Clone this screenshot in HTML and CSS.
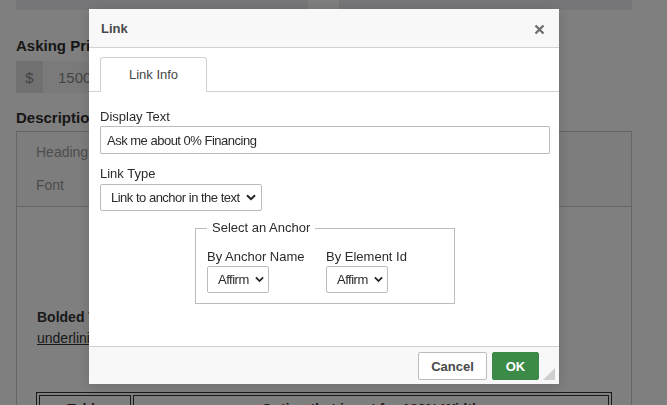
FILE: index.html
```
<!DOCTYPE html>
<html lang="en">
<head>
    <meta charset="UTF-8">
    <meta name="viewport" content="width=device-width, initial-scale=1.0">
    <title>Edit Listing</title>
    <link rel="stylesheet" href="styles.css">
</head>
<body>
    <div class="page">
        <div class="top-row">
            <div class="top-field"></div>
            <div class="top-field"></div>
        </div>

        <h3 class="field-title">Asking Price</h3>
        <div class="price-group">
            <span class="price-addon">$</span>
            <span class="price-input">1500</span>
        </div>

        <h3 class="field-title desc-title">Description</h3>
        <div class="editor">
            <div class="editor-toolbar">
                <div class="toolbar-combo">Heading 1</div>
                <div class="toolbar-combo">Font</div>
            </div>
            <div class="editor-content">
                <p class="bolded">Bolded Text</p>
                <p><u>underlining</u></p>
                <table class="content-table">
                    <tr>
                        <th class="col-first">Table</th>
                        <th>Option that is set for 100% Width</th>
                    </tr>
                </table>
            </div>
        </div>
    </div>

    <div class="overlay"></div>

    <div class="dialog">
        <div class="dialog-header">
            <span class="dialog-title">Link</span>
            <svg class="dialog-close" width="11" height="11" viewBox="0 0 11 11">
                <path d="M1.5 1.5 L9.5 9.5 M9.5 1.5 L1.5 9.5" stroke="#6f6f6f" stroke-width="2.3" fill="none"/>
            </svg>
        </div>

        <div class="dialog-tabs">
            <div class="dialog-tab">Link Info</div>
        </div>

        <div class="dialog-body">
            <label class="field-label" for="displayText">Display Text</label>
            <input class="text-input" id="displayText" type="text" value="Ask me about 0% Financing">

            <label class="field-label spaced" for="linkType">Link Type</label>
            <div class="select-box wide">
                <select id="linkType">
                    <option>Link to anchor in the text</option>
                </select>
                <svg class="chevron" width="10" height="7" viewBox="0 0 10 7">
                    <path d="M1 1.2 L5 5.2 L9 1.2" stroke="#222" stroke-width="2" fill="none"/>
                </svg>
            </div>

            <fieldset class="anchor-box">
                <legend>Select an Anchor</legend>
                <div class="anchor-cols">
                    <div class="anchor-col">
                        <label class="field-label" for="anchorName">By Anchor Name</label>
                        <div class="select-box small">
                            <select id="anchorName">
                                <option>Affirm</option>
                            </select>
                            <svg class="chevron" width="10" height="7" viewBox="0 0 10 7">
                                <path d="M1 1.2 L5 5.2 L9 1.2" stroke="#222" stroke-width="2" fill="none"/>
                            </svg>
                        </div>
                    </div>
                    <div class="anchor-col">
                        <label class="field-label" for="elementId">By Element Id</label>
                        <div class="select-box small">
                            <select id="elementId">
                                <option>Affirm</option>
                            </select>
                            <svg class="chevron" width="10" height="7" viewBox="0 0 10 7">
                                <path d="M1 1.2 L5 5.2 L9 1.2" stroke="#222" stroke-width="2" fill="none"/>
                            </svg>
                        </div>
                    </div>
                </div>
            </fieldset>
        </div>

        <div class="dialog-footer">
            <button class="btn btn-cancel">Cancel</button>
            <button class="btn btn-ok">OK</button>
            <span class="resize-handle"></span>
        </div>
    </div>
</body>
</html>
```

FILE: styles.css
```
* {
    margin: 0;
    padding: 0;
    box-sizing: border-box;
}

body {
    font-family: 'Liberation Sans', Arial, sans-serif;
    background: #fff;
    color: #333;
    width: 667px;
    height: 405px;
    overflow: hidden;
}

/* ---------- page behind the dialog ---------- */

.page {
    width: 632px;
    padding-left: 16px;
}

.top-row {
    display: grid;
    grid-template-columns: 292px 293px;
    gap: 31px;
    height: 10px;
}

.top-field {
    background: #eeeff3;
}

.field-title {
    font-size: 15px;
    font-weight: bold;
    color: #2e2e2e;
    line-height: 18px;
    margin-top: 27px;
    margin-bottom: 6px;
}

.price-group {
    display: flex;
    height: 32px;
    width: 292px;
}

.price-addon {
    width: 27px;
    background: #e3e3e3;
    color: #888;
    font-size: 15px;
    display: flex;
    align-items: center;
    justify-content: center;
}

.price-input {
    flex: 1;
    background: #f5f5f5;
    color: #888;
    font-size: 15px;
    padding-left: 15px;
    display: flex;
    align-items: center;
}

.field-title.desc-title {
    margin-top: 16px;
    margin-bottom: 4px;
}

.editor {
    border: 1px solid #ccc;
    border-bottom: none;
    height: 280px;
}

.editor-toolbar {
    height: 75px;
    border-bottom: 1px solid #ccc;
    padding: 12px 0 0 19px;
    background: #fafafa;
}

.toolbar-combo {
    font-size: 14px;
    color: #999;
    height: 33px;
    line-height: 16px;
}

.editor-content {
    padding: 100px 20px 0 20px;
    font-size: 14px;
    color: #333;
}

.editor-content p {
    line-height: 21px;
}

.editor-content .bolded {
    font-weight: bold;
}

.content-table {
    margin-top: 43px;
    margin-left: -1px;
    width: 576px;
    border: 1px solid #333;
    border-spacing: 2px;
}

.content-table th {
    border: 1px solid #333;
    height: 24px;
    font-size: 14px;
    padding-top: 5px;
    vertical-align: top;
}

.content-table .col-first {
    width: 92px;
}

.overlay {
    position: fixed;
    inset: 0;
    background: rgba(0, 0, 0, 0.5);
}

/* ---------- link dialog ---------- */

.dialog {
    position: absolute;
    left: 89px;
    top: 9px;
    width: 470px;
    height: 375px;
    background: #fff;
    display: flex;
    flex-direction: column;
    box-shadow: 0 2px 12px rgba(0, 0, 0, 0.15);
    font-size: 13px;
    color: #2b2b2b;
}

.dialog-header {
    height: 39px;
    background: #f8f8f8;
    border-bottom: 1px solid #d1d1d1;
    display: flex;
    align-items: center;
    justify-content: space-between;
    padding: 0 14px 0 12px;
}

.dialog-title {
    font-weight: bold;
    color: #484848;
}

.dialog-close {
    margin-top: 2px;
}

.dialog-tabs {
    height: 44px;
    border-bottom: 1px solid #d1d1d1;
    padding: 9px 0 0 11px;
    display: flex;
}

.dialog-tab {
    width: 107px;
    height: 35px;
    border: 1px solid #d1d1d1;
    border-bottom: none;
    border-radius: 3px 3px 0 0;
    background: #fff;
    margin-bottom: -1px;
    text-align: center;
    line-height: 33px;
    color: #484848;
}

.dialog-body {
    flex: 1;
    padding: 17px 9px 0 11px;
}

.field-label {
    display: block;
    line-height: 16px;
    margin-bottom: 1px;
    color: #2b2b2b;
}

.field-label.spaced {
    margin-top: 12px;
    margin-bottom: 2px;
}

.text-input {
    display: block;
    width: 450px;
    height: 28px;
    border: 1px solid #bcbcbc;
    border-radius: 1px;
    padding: 0 6px;
    font: inherit;
    letter-spacing: -0.5px;
    color: #2b2b2b;
    outline: none;
}

.select-box {
    display: flex;
    align-items: center;
    height: 27px;
    border: 1px solid #bcbcbc;
    border-radius: 2px;
    background: #fff;
}

.select-box select {
    appearance: none;
    -webkit-appearance: none;
    border: none;
    background: transparent;
    font: inherit;
    letter-spacing: -0.5px;
    color: #2b2b2b;
    flex: 1;
    min-width: 0;
    height: 100%;
    padding-left: 10px;
    outline: none;
}

.select-box .chevron {
    flex: none;
    margin-right: 5px;
}

.select-box.wide {
    width: 162px;
}

.select-box.small {
    width: 62px;
}

.select-box.small .chevron {
    width: 9px;
    margin-right: 4px;
}

.anchor-box {
    width: 260px;
    margin: 9px auto 0;
    border: 1px solid #bcbcbc;
    padding: 13px 12px 10px 11px;
}

.anchor-box legend {
    padding: 0 5px;
    line-height: 16px;
    color: #2b2b2b;
}

.anchor-cols {
    display: flex;
}

.anchor-col:first-child {
    width: 119px;
}

.anchor-col .field-label {
    margin-bottom: 1px;
}

.dialog-footer {
    height: 38px;
    border-top: 1px solid #d1d1d1;
    background: #f8f8f8;
    display: flex;
    justify-content: flex-end;
    align-items: flex-start;
    gap: 5px;
    padding: 5px 20px 0 0;
    position: relative;
}

.btn {
    height: 28px;
    font: inherit;
    font-weight: bold;
    border-radius: 2px;
    cursor: pointer;
}

.btn-cancel {
    width: 69px;
    background: #fff;
    border: 1px solid #bcbcbc;
    color: #484848;
}

.btn-ok {
    width: 47px;
    background: #3b8a47;
    border: 1px solid #3b8a47;
    color: #fff;
}

.resize-handle {
    position: absolute;
    right: 4px;
    bottom: 4px;
    width: 0;
    height: 0;
    border-left: 12px solid transparent;
    border-bottom: 12px solid #cfcfcf;
}
```
